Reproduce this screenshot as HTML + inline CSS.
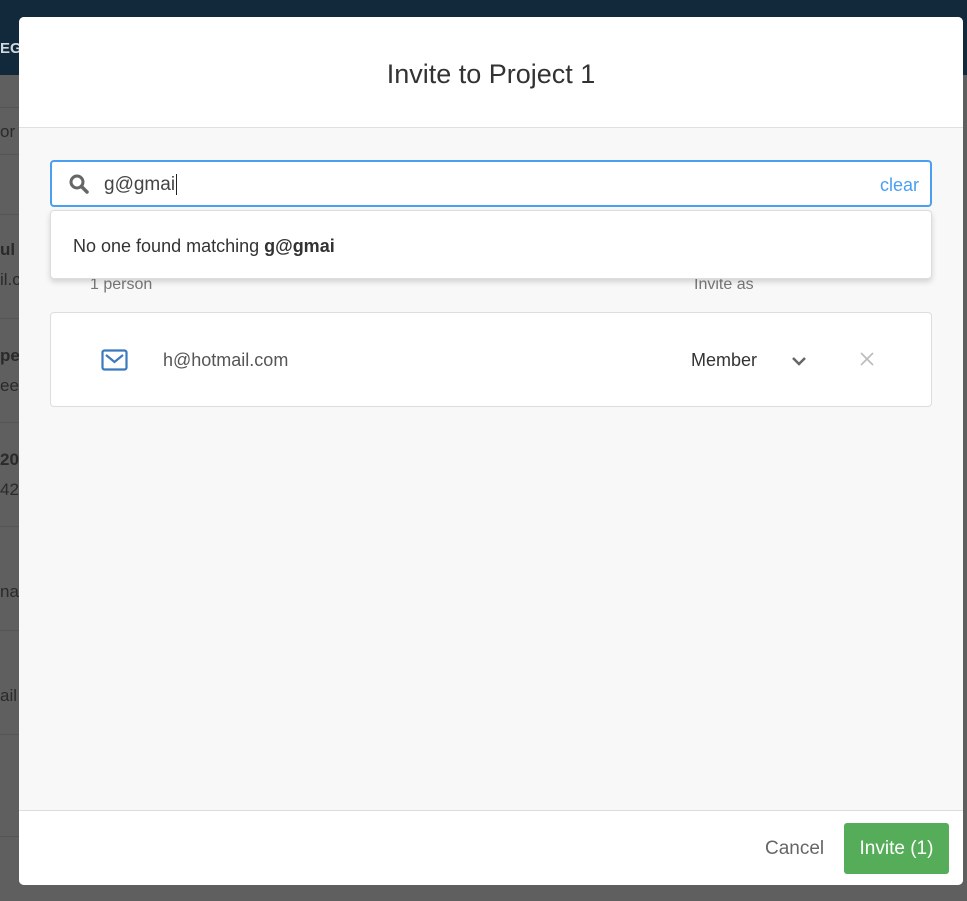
<!DOCTYPE html>
<html><head><meta charset="utf-8"><style>
*{margin:0;padding:0;box-sizing:border-box}
body{width:967px;height:901px;overflow:hidden;background:#5f5f5f;font-family:"Liberation Sans",sans-serif;position:relative}
.nav{position:absolute;left:0;top:0;width:967px;height:75px;background:#11293a}
.bg{position:absolute;color:#2a2a2a;font-size:17px}
.ln{position:absolute;left:0;width:19px;height:1px;background:#555}
.modal{position:absolute;left:19px;top:17px;width:944px;height:868px;background:#f8f8f8;border-radius:5px;overflow:hidden}
.hdr{height:111px;background:#fff;border-bottom:1px solid #e0e0e0;text-align:center;font-size:27px;color:#333;line-height:114px}
.search{position:absolute;left:31px;top:143px;width:882px;height:47px;border:2px solid #4a9ff0;border-radius:4px;background:#fff}
.drop{position:absolute;left:31px;top:193px;width:882px;height:69px;background:#fff;border:1px solid #ddd;border-radius:4px;box-shadow:0 3px 6px rgba(0,0,0,.15);font-size:18px;color:#333;padding-left:22px;line-height:70px}
.lbl{position:absolute;font-size:16px;color:#777}
.card{position:absolute;left:31px;top:295px;width:882px;height:95px;background:#fff;border:1px solid #ddd;border-radius:4px}
.ftr{position:absolute;left:0;top:793px;width:944px;height:75px;background:#fff;border-top:1px solid #ddd}
.btn{position:absolute;left:825px;top:12px;width:105px;height:51px;background:#56ad59;border-radius:3px;color:#fff;font-size:19px;text-align:center;line-height:52px}
</style></head><body>
<div class="nav"></div>
<div class="bg" style="left:0;top:40px;color:#cfd8e0;font-weight:bold;font-size:15px">EG</div>
<div class="ln" style="top:107px"></div><div class="ln" style="top:154px"></div><div class="ln" style="top:214px"></div>
<div class="ln" style="top:318px"></div><div class="ln" style="top:422px"></div><div class="ln" style="top:526px"></div>
<div class="ln" style="top:630px"></div><div class="ln" style="top:734px"></div><div class="ln" style="top:836px"></div>
<div class="bg" style="left:0;top:122px">or</div>
<div class="bg" style="left:0;top:240px;font-weight:bold">ul</div>
<div class="bg" style="left:0;top:270px">il.c</div>
<div class="bg" style="left:0;top:346px;font-weight:bold">pe</div>
<div class="bg" style="left:0;top:376px">ee</div>
<div class="bg" style="left:0;top:450px;font-weight:bold">20</div>
<div class="bg" style="left:0;top:480px">42</div>
<div class="bg" style="left:0;top:582px">nai</div>
<div class="bg" style="left:0;top:686px">ail</div>
<div class="modal">
<div class="hdr">Invite to Project 1</div>
<div class="search">
<svg style="position:absolute;left:17px;top:12px" width="20" height="20" viewBox="0 0 20 20"><circle cx="8" cy="8" r="6" fill="none" stroke="#666" stroke-width="3"/><line x1="12.5" y1="12.5" x2="18" y2="18" stroke="#666" stroke-width="3.5" stroke-linecap="round"/></svg>
<span style="position:absolute;left:52px;top:12px;font-size:19px;color:#444">g@gmai<span style="border-left:1.5px solid #222;margin-left:1px"></span></span>
<span style="position:absolute;right:11px;top:13px;font-size:18px;color:#4a9ff0">clear</span>
</div>
<div class="lbl" style="left:71px;top:259px">1 person</div>
<div class="lbl" style="left:675px;top:259px">Invite as</div>
<div class="drop">No one found matching <b>g@gmai</b></div>
<div class="card">
<svg style="position:absolute;left:50px;top:36px" width="27" height="22" viewBox="0 0 27 22"><rect x="1.5" y="1.5" width="24" height="19" rx="2" fill="none" stroke="#3a78c0" stroke-width="2.2"/><path d="M5 6 L13.5 13 L22 6" fill="none" stroke="#3a78c0" stroke-width="2.2"/></svg>
<span style="position:absolute;left:112px;top:37px;font-size:18px;color:#555">h@hotmail.com</span>
<span style="position:absolute;left:640px;top:37px;font-size:18px;color:#333">Member</span>
<svg style="position:absolute;left:740px;top:42px" width="16" height="12" viewBox="0 0 16 12"><path d="M2 3 L8 9 L14 3" fill="none" stroke="#666" stroke-width="2.5"/></svg>
<svg style="position:absolute;left:809px;top:39px" width="14" height="14" viewBox="0 0 14 14"><path d="M1 1 L13 13 M13 1 L1 13" stroke="#bbb" stroke-width="1.6"/></svg>
</div>
<div class="ftr">
<span style="position:absolute;left:746px;top:27px;font-size:19px;color:#666">Cancel</span>
<div class="btn">Invite (1)</div>
</div>
</div>
</body></html>
